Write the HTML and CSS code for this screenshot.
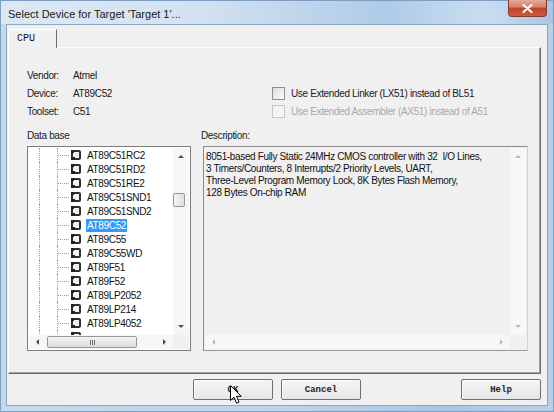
FILE: index.html
```html
<!DOCTYPE html>
<html>
<head>
    <title>Select Device for Target</title>
    <link rel="stylesheet" href="styles.css">
</head>
<body>
    <div class="window">
        <div class="titlebar">
            <span class="title">Select Device for Target 'Target 1'...</span>
            <div class="close">
                <svg width="11" height="9" viewBox="0 0 11 9">
                    <path d="M1.5 1 L9.5 8 M9.5 1 L1.5 8" stroke="#fff" stroke-width="2.2" stroke-linecap="round"/>
                </svg>
            </div>
        </div>

        <div class="client">
            <div class="tabs">
                <div class="tab">CPU</div>
            </div>

            <div class="panel">
                <div class="info">
                    <span>Vendor:</span>
                    <span>Atmel</span>
                    <span></span>

                    <span>Device:</span>
                    <span>AT89C52</span>
                    <label class="check"><span class="box"></span>Use Extended Linker (LX51) instead of BL51</label>

                    <span>Toolset:</span>
                    <span>C51</span>
                    <label class="check disabled"><span class="box"></span>Use Extended Assembler (AX51) instead of A51</label>
                </div>

                <div class="lists">
                    <div class="db">
                        <div class="cap">Data base</div>
                        <div class="sunken tree">
                            <div class="tree-view">
                                <div class="node"><span class="g1"></span><span class="g2"></span><span class="chip"></span><span class="name">AT89C51RC2</span></div>
                                <div class="node"><span class="g1"></span><span class="g2"></span><span class="chip"></span><span class="name">AT89C51RD2</span></div>
                                <div class="node"><span class="g1"></span><span class="g2"></span><span class="chip"></span><span class="name">AT89C51RE2</span></div>
                                <div class="node"><span class="g1"></span><span class="g2"></span><span class="chip"></span><span class="name">AT89C51SND1</span></div>
                                <div class="node"><span class="g1"></span><span class="g2"></span><span class="chip"></span><span class="name">AT89C51SND2</span></div>
                                <div class="node sel"><span class="g1"></span><span class="g2"></span><span class="chip"></span><span class="name">AT89C52</span></div>
                                <div class="node"><span class="g1"></span><span class="g2"></span><span class="chip"></span><span class="name">AT89C55</span></div>
                                <div class="node"><span class="g1"></span><span class="g2"></span><span class="chip"></span><span class="name">AT89C55WD</span></div>
                                <div class="node"><span class="g1"></span><span class="g2"></span><span class="chip"></span><span class="name">AT89F51</span></div>
                                <div class="node"><span class="g1"></span><span class="g2"></span><span class="chip"></span><span class="name">AT89F52</span></div>
                                <div class="node"><span class="g1"></span><span class="g2"></span><span class="chip"></span><span class="name">AT89LP2052</span></div>
                                <div class="node"><span class="g1"></span><span class="g2"></span><span class="chip"></span><span class="name">AT89LP214</span></div>
                                <div class="node"><span class="g1"></span><span class="g2"></span><span class="chip"></span><span class="name">AT89LP4052</span></div>
                                <div class="node"><span class="g1"></span><span class="g2"></span><span class="chip"></span><span class="name"></span></div>
                            </div>
                            <div class="vscroll">
                                <div class="sbtn"><span class="tri up"></span></div>
                                <div class="vthumb"></div>
                                <div class="fill"></div>
                                <div class="sbtn"><span class="tri down"></span></div>
                            </div>
                            <div class="hscroll">
                                <div class="sbtn"><span class="tri left"></span></div>
                                <div class="hthumb"><span class="grip"></span></div>
                                <div class="fill"></div>
                                <div class="sbtn"><span class="tri right"></span></div>
                            </div>
                            <div class="corner"></div>
                        </div>
                    </div>

                    <div class="desc">
                        <div class="cap">Description:</div>
                        <div class="sunken descbox">
                            <div class="desc-text">8051-based Fully Static 24MHz CMOS controller with 32  I/O Lines,
3 Timers/Counters, 8 Interrupts/2 Priority Levels, UART,
Three-Level Program Memory Lock, 8K Bytes Flash Memory,
128 Bytes On-chip RAM</div>
                            <div class="vscroll off">
                                <div class="sbtn"><span class="tri up"></span></div>
                                <div class="fill"></div>
                                <div class="sbtn"><span class="tri down"></span></div>
                            </div>
                            <div class="hscroll off">
                                <div class="sbtn"><span class="tri left"></span></div>
                                <div class="fill"></div>
                                <div class="sbtn"><span class="tri right"></span></div>
                            </div>
                            <div class="corner"></div>
                        </div>
                    </div>
                </div>
            </div>

            <div class="buttons">
                <div class="btn ok">OK
                    <svg class="cursor" width="13" height="20" viewBox="0 0 13 20">
                        <path d="M0.5 0.5 L0.5 15.5 L4 12.2 L6.6 18.2 L9 17.1 L6.5 11.3 L11.2 11.3 Z" fill="#fff" stroke="#000" stroke-width="1" stroke-linejoin="round"/>
                    </svg>
                </div>
                <div class="btn">Cancel</div>
                <div class="btn help">Help</div>
            </div>
        </div>
    </div>
</body>
</html>
```

FILE: styles.css
```css
body {
    margin: 0;
    font-family: "Liberation Sans", Arial, sans-serif;
    background: #f0f0f0;
}

.window {
    width: 554px;
    height: 412px;
    box-sizing: border-box;
    border: 1px solid #7d9ec0;
    padding: 0 5px 5px 5px;
    background: linear-gradient(to right, #c5d9ee 0%, #bdd4eb 50%, #a9c7e5 80%, #b7cfe9 100%);
    display: flex;
    flex-direction: column;
}

/* title bar */
.titlebar {
    height: 23px;
    display: flex;
    align-items: flex-start;
    background: linear-gradient(to right, #dce8f4 0%, #d3e2f2 35%, #afcbe7 70%, #c9ddf1 88%, #a8c6e4 100%);
    margin: 0 -5px;
    padding: 0 5px;
}

.title {
    font-size: 11px;
    color: #1a1a1a;
    padding: 7px 0 0 2px;
}

.close {
    margin: -1px 1px 0 auto;
    width: 39px;
    height: 17px;
    box-sizing: border-box;
    border: 1px solid #8a3a2c;
    border-top: none;
    border-radius: 0 0 4px 4px;
    background: linear-gradient(#e6a79b 0%, #d77b6c 45%, #c0432c 50%, #cf5a3c 100%);
    display: flex;
    align-items: center;
    justify-content: center;
}

/* client area */
.client {
    flex: 1;
    border: 1px solid #8ea6bf;
    background: #f0f0f0;
    display: flex;
    flex-direction: column;
}

.tabs {
    display: flex;
    height: 18px;
    margin-top: 4px;
    padding-left: 1px;
}

.tab {
    position: relative;
    width: 49px;
    height: 19px;
    box-sizing: border-box;
    border: 1px solid;
    border-color: #fff #6d6d6d transparent #fff;
    border-bottom: none;
    background: #f0f0f0;
    font-family: "Liberation Mono", monospace;
    font-size: 10px;
    line-height: 18px;
    padding-left: 8px;
    color: #111;
}

.panel {
    height: 327px;
    box-sizing: border-box;
    margin: 0 6px 0 1px;
    border: 1px solid;
    border-color: #fff #6a6a6a #6a6a6a #fff;
    box-shadow: inset -1px -1px #a0a0a0;
}

.info {
    display: grid;
    grid-template-columns: 46px 199px auto;
    grid-auto-rows: 18px;
    align-items: center;
    padding: 18px 0 0 18px;
    font-size: 10px;
    letter-spacing: -0.35px;
    color: #1a1a1a;
}

.check {
    display: flex;
    align-items: center;
    gap: 6px;
}

.box {
    width: 13px;
    height: 13px;
    box-sizing: border-box;
    border: 1px solid #8e8f8f;
    background: linear-gradient(135deg, #dedede, #fbfbfb);
}

.check.disabled {
    color: #a8a8a8;
}

.check.disabled .box {
    border-color: #c6c6c6;
    background: #f4f4f4;
}

/* lists */
.lists {
    display: flex;
    padding: 9px 0 0 18px;
}

.cap {
    font-size: 10px;
    letter-spacing: -0.35px;
    line-height: 13px;
    margin-bottom: 4px;
    color: #1a1a1a;
}

.db {
    width: 164px;
}

.desc {
    margin-left: 10px;
}

.sunken {
    height: 205px;
    box-sizing: border-box;
    border: 1px solid #7c7c7c;
    padding: 1px;
    display: grid;
    grid-template-rows: 1fr 14px;
}

.tree {
    grid-template-columns: 1fr 16px;
    background: #fff;
}

.descbox {
    width: 325px;
    margin-left: 2px;
    grid-template-columns: 1fr 16px;
    background: #f0f0f0;
    border-color: #8a8a8a #d0d0d0 #9a9a9a #8a8a8a;
}

.tree-view {
    overflow: hidden;
    background: #fff;
}

.node {
    display: flex;
    align-items: center;
    height: 14px;
    font-size: 10px;
    letter-spacing: -0.35px;
    color: #111;
}

.g1 {
    margin-left: 10px;
    width: 18px;
    height: 14px;
    box-sizing: border-box;
    border-left: 1px dotted #a0a0a0;
}

.g2 {
    width: 13px;
    height: 14px;
    box-sizing: border-box;
    border-left: 1px dotted #a0a0a0;
    background: repeating-linear-gradient(to right, #a0a0a0 0 1px, transparent 1px 2px) left center / 100% 1px no-repeat;
}

.chip {
    position: relative;
    margin-left: 1px;
    width: 10px;
    height: 10px;
    box-sizing: border-box;
    border: 2px solid #2f2f2f;
    border-radius: 2px;
    background: #f2f2f2;
}

.chip::before {
    content: "";
    position: absolute;
    left: -2px;
    top: -2px;
    width: 3px;
    height: 3px;
    background: #222;
}

.chip::after {
    content: "";
    position: absolute;
    left: -2px;
    bottom: -2px;
    width: 4px;
    height: 3px;
    background: #222;
}

.name {
    margin-left: 5px;
    padding: 0 1px;
    line-height: 13px;
}

.node.sel .name {
    background: #3399ff;
    color: #fff;
}

.desc-text {
    padding: 3px 0 0 1px;
    font-size: 10px;
    letter-spacing: -0.35px;
    line-height: 12px;
    white-space: pre;
    overflow: hidden;
    color: #111;
}

/* scrollbars */
.vscroll {
    display: flex;
    flex-direction: column;
    background: #f6f6f6;
}

.hscroll {
    display: flex;
    background: #f6f6f6;
}

.vscroll.off,
.hscroll.off {
    background: #f7f7f7;
}

.sbtn {
    flex: none;
    width: 17px;
    height: 17px;
    display: flex;
    align-items: center;
    justify-content: center;
}

.vscroll .sbtn {
    width: 16px;
}

.hscroll .sbtn {
    height: 14px;
}

.fill {
    flex: 1;
}

.tri {
    width: 0;
    height: 0;
    border: 3px solid transparent;
}

.tri.up {
    border-top: none;
    border-bottom-color: #505050;
}

.tri.down {
    border-bottom: none;
    border-top-color: #505050;
}

.tri.left {
    border-left: none;
    border-right-color: #505050;
}

.tri.right {
    border-right: none;
    border-left-color: #505050;
}

.off .tri.up { border-bottom-color: #b8b8b8; }
.off .tri.down { border-top-color: #b8b8b8; }
.off .tri.left { border-right-color: #b8b8b8; }
.off .tri.right { border-left-color: #b8b8b8; }

.vthumb {
    margin-top: 28px;
    width: 12px;
    height: 14px;
    box-sizing: border-box;
    border: 1px solid #979797;
    border-radius: 2px;
    background: linear-gradient(to right, #f4f4f4, #e1e1e1);
}

.hthumb {
    margin: 1px 0 0 1px;
    width: 90px;
    height: 12px;
    box-sizing: border-box;
    border: 1px solid #979797;
    border-radius: 2px;
    background: linear-gradient(#f4f4f4, #dcdcdc);
    display: flex;
    align-items: center;
    justify-content: center;
}

.grip {
    width: 5px;
    height: 5px;
    background: repeating-linear-gradient(to right, #6f6f6f 0 1px, transparent 1px 2px);
}

.corner {
    background: #f0f0f0;
}

/* buttons */
.buttons {
    display: flex;
    margin-top: 5px;
    padding: 0 6px 0 186px;
}

.btn {
    width: 80px;
    height: 21px;
    box-sizing: border-box;
    border: 1px solid #6e6e6e;
    border-radius: 2px;
    background: linear-gradient(#f5f5f5, #e6e6e6);
    box-shadow: inset 1px 1px #fcfcfc;
    font-family: "Liberation Mono", monospace;
    font-weight: bold;
    font-size: 9px;
    color: #222;
    display: flex;
    align-items: center;
    justify-content: center;
    margin-right: 8px;
}

.btn.ok {
    position: relative;
}

.btn.help {
    margin-left: auto;
    margin-right: 0;
}

.cursor {
    position: absolute;
    left: 36px;
    top: 5px;
}
```
